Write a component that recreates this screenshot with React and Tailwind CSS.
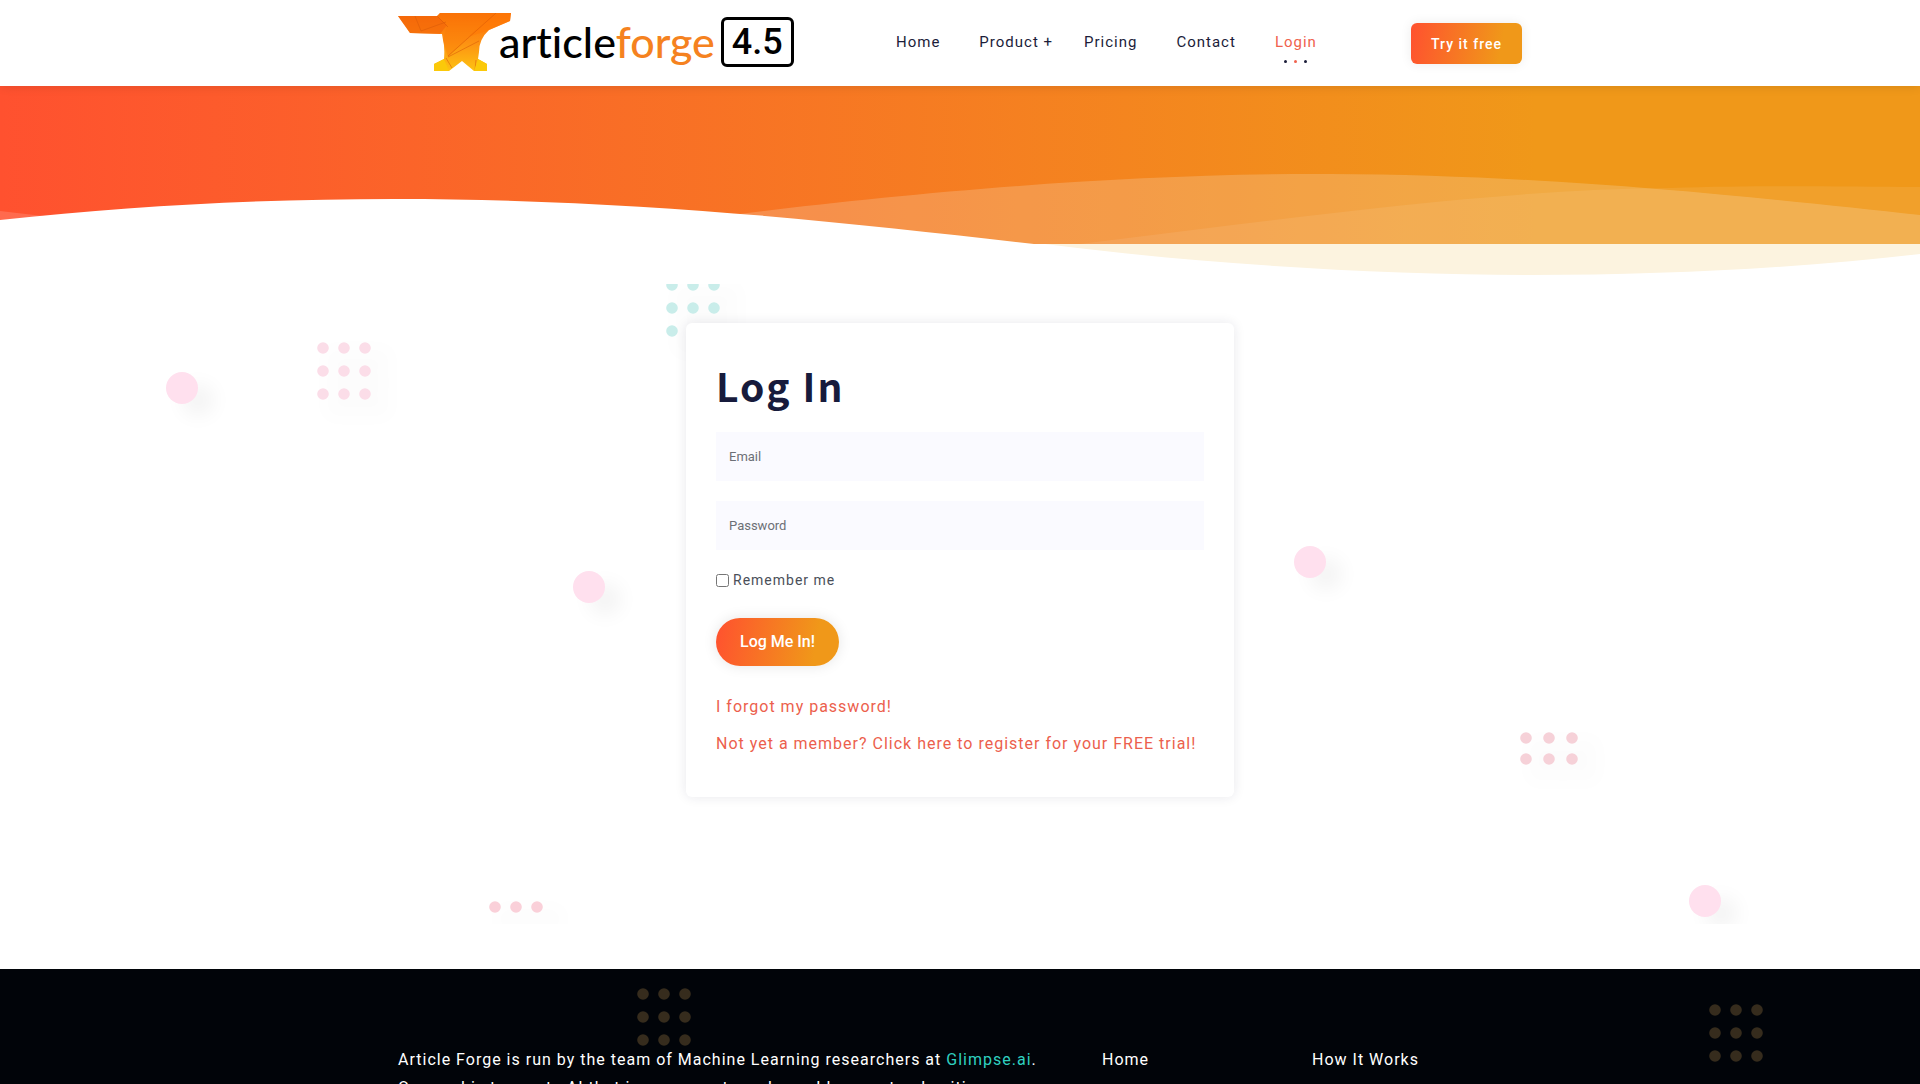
import React, { useState } from "react";

const navLinks = ["Home", "Product +", "Pricing", "Contact"];

// floating blobs behind the form, x/y relative to the decor layer
const blobs = [
  { id: 1, pos: "left-[8.65%] top-[88px]" },
  { id: 2, pos: "left-[29.85%] top-[287px]" },
  { id: 3, pos: "left-[67.4%] top-[262px]" },
  { id: 4, pos: "left-[87.95%] top-[601px]" },
];

const Dots = ({ cols = 3, rows = 3, gapX = 21, gapY = 23, className = "" }) => {
  const width = (cols - 1) * gapX + 12;
  const height = (rows - 1) * gapY + 12;
  return (
    <svg width={width} height={height} className={className} aria-hidden="true">
      {Array.from({ length: cols * rows }, (_, i) => (
        <circle key={i} cx={6 + (i % cols) * gapX} cy={6 + Math.floor(i / cols) * gapY} r="5.8" fill="currentColor" />
      ))}
    </svg>
  );
};

const Logo = () => (
  <a href="#" className="flex items-center" aria-label="articleforge 4.5">
    <svg viewBox="0 0 113 58" width="113" height="58" className="mb-0.5" aria-hidden="true">
      <defs>
        <linearGradient id="anvil" x1="0" y1="0" x2="0" y2="1">
          <stop offset="0" stopColor="#fb6d06" />
          <stop offset="0.5" stopColor="#fd9012" />
          <stop offset="1" stopColor="#fdc313" />
        </linearGradient>
      </defs>
      <path d="M0 3H39L42 0H113L112 8L91 17Q81 26 81 39L80 46L89 51V58H76L64 48L51 58H36V51L46 46Q47 34 45 27L44 21L12 20Z" fill="url(#anvil)" />
      <path d="M0 3H39L49 12L42 21L12 20Z" fill="#f2640a" opacity="0.6" />
      <path d="M42 0H96L50 44L45 27L49 12L39 3Z" fill="#fb7a08" opacity="0.4" />
      <path d="M96 0H113L112 8L91 17L70 24Z" fill="#ff7a05" opacity="0.6" />
      <path d="M17 3L23 18M23 18L48 9M39 3L50 14M98 0L50 43M81 28L50 44M48 45L54 55M78 47L77 57" stroke="#d95a08" strokeWidth="1" opacity="0.55" fill="none" />
      <path d="M36 51L46 46L51 58H36Z" fill="#fbc90a" />
      <path d="M80 46L89 51V58H76Z" fill="#fbc90a" />
    </svg>
    <span className="-ml-3 mb-1 font-[Lato,sans-serif] text-[43px] font-medium leading-none tracking-normal text-black [font-variant-ligatures:none]">
      article<span className="text-[#f58220]">forge</span>
    </span>
    <span className="mb-0.5 ml-1.5 rounded-md border-3 border-black px-2 text-4xl font-medium leading-11 tracking-normal text-black">4.5</span>
  </a>
);

const Header = () => (
  <header className="relative z-10 h-[86px] bg-white shadow-[0_0_10px_rgba(0,0,0,0.12)]">
    <div className="mx-auto flex h-full max-w-[1124px] items-center justify-between">
      <Logo />
      <nav className="mb-0.5 ml-14 flex items-center gap-[39px] text-[15px] text-[#1b1d3a]">
        {navLinks.map((item) => (
          <a key={item} href="#" className={item === "Product +" ? "-mr-2 hover:text-[#f0624d]" : "hover:text-[#f0624d]"}>
            {item}
          </a>
        ))}
        <a href="#" aria-current="page" className="relative text-[#f0624d]">
          Login
          <span className="absolute inset-x-0 -bottom-[10px] flex justify-center gap-[7px]">
            <i className="size-[3px] rounded-full bg-[#1b1d3a]" />
            <i className="size-[3px] rounded-full bg-[#f0624d]" />
            <i className="size-[3px] rounded-full bg-[#1b1d3a]" />
          </span>
        </a>
      </nav>
      <a href="#" className="ml-12 rounded-md bg-[linear-gradient(100deg,#ff512f,#f09819_80%)] px-5 pb-[7px] pt-[9px] text-sm font-medium leading-[25px] text-white shadow-[0_0_12px_rgba(0,0,0,0.08)]">
        Try it free
      </a>
    </div>
  </header>
);

const Banner = () => (
  <div className="relative h-[158px] bg-[linear-gradient(to_right,#ff512f,#f09819_80%)]">
    <svg viewBox="0 0 1920 198" preserveAspectRatio="none" className="absolute inset-x-0 top-0 h-[198px] w-full" aria-hidden="true">
      <path d="M1045 158C1200 178 1380 189 1530 189C1670 189 1800 182 1920 168V158Z" fill="#fcf3df" />
      <path d="M0 125L60 132V140H0Z" fill="#fff" opacity="0.15" />
      <path d="M700 133C860 112 1100 87 1330 88C1560 89 1760 112 1920 129V158H1000Z" fill="#f4efdc" opacity="0.22" />
      <path d="M1080 158C1290 132 1500 103 1670 102C1770 99 1850 101 1920 101V158Z" fill="#fff" opacity="0.08" />
      <path d="M0 134C130 120 260 113 395 113C640 113 850 137 1034 158H0Z" fill="#fff" />
    </svg>
  </div>
);

const LoginForm = () => {
  const [formData, setFormData] = useState({ email: "", password: "", remember: false });

  const handleChange = (e) => {
    const { name, type, checked, value } = e.target;
    setFormData({ ...formData, [name]: type === "checkbox" ? checked : value });
  };

  return (
    <form
      onSubmit={(e) => e.preventDefault()}
      className="relative mx-auto w-full max-w-[548px] rounded-md bg-white px-[30px] pb-[35px] pt-8 shadow-[0_0_12px_rgba(30,30,70,0.1)]"
    >
      <h1 className="font-['Noto_Sans_CJK_JP','Noto_Sans',sans-serif] text-[39px] font-bold leading-[60px] tracking-[2px] text-[#171b3c]">
        Log In
      </h1>
      <input
        name="email" type="email" placeholder="Email" aria-label="Email"
        value={formData.email} onChange={handleChange}
        className="mt-[17px] block h-[49px] w-full bg-[#fafaff] px-[13px] text-[13px] tracking-normal text-gray-700 outline-none placeholder:text-[#6c6f76]"
      />
      <input
        name="password" type="password" placeholder="Password" aria-label="Password"
        value={formData.password} onChange={handleChange}
        className="mt-5 block h-[49px] w-full bg-[#fafaff] px-[13px] text-[13px] tracking-normal text-gray-700 outline-none placeholder:text-[#6c6f76]"
      />
      <label className="mt-5 flex items-center gap-1 text-sm text-[#4a4f59]">
        <input name="remember" type="checkbox" checked={formData.remember} onChange={handleChange} className="size-[13px]" />
        Remember me
      </label>
      <button type="submit" className="mt-7 h-12 rounded-full bg-[linear-gradient(100deg,#ff512f,#f09819_80%)] px-6 font-medium tracking-normal text-white shadow-[0_0_14px_rgba(0,0,0,0.1)]">
        Log Me In!
      </button>
      <div className="mt-[22px] flex flex-col items-start leading-[37px] text-[#ec5f4d]">
        <a href="#">I forgot my password!</a>
        <a href="#">Not yet a member? Click here to register for your FREE trial!</a>
      </div>
    </form>
  );
};

const Footer = () => (
  <footer className="relative bg-[#010409] pt-[77px] text-white">
    <Dots className="absolute left-[33.2%] top-[19px] text-[#362c1d]" />
    <Dots className="absolute left-[89%] top-[35px] text-[#362c1d]" />
    <div className="relative mx-auto flex max-w-[1124px] leading-7">
      <p className="w-[704px] pr-4">
        Article Forge is run by the team of Machine Learning researchers at{" "}
        <a href="#" className="text-[#2fd0c0]">Glimpse.ai</a>.<br />
        Our goal is to create AI that is as accurate and capable as natural writing.
      </p>
      <a href="#" className="w-[210px]">Home</a>
      <a href="#">How It Works</a>
    </div>
  </footer>
);

const App = () => (
  <div className="h-screen overflow-hidden bg-white font-[Roboto,sans-serif] tracking-[1px]">
    <Header />
    <Banner />
    <main className="relative px-4 pb-[172px] pt-[79px]">
      <div className="absolute inset-x-0 bottom-[45px] top-10 overflow-hidden" aria-hidden="true">
        {blobs.map((b) => (
          <span key={b.id} className={`absolute size-8 rounded-full bg-[#ffe0ee] shadow-[16px_12px_20px_rgba(0,0,0,0.05)] ${b.pos}`} />
        ))}
        <Dots className="absolute left-[16.5%] top-[58px] text-[#fbdde8] drop-shadow-[14px_12px_10px_rgba(0,0,0,0.05)]" />
        <Dots className="absolute -top-[5px] left-[34.7%] text-[#c9edea] drop-shadow-[14px_12px_10px_rgba(0,0,0,0.05)]" />
        <Dots rows={2} gapX={23} gapY={21} className="absolute left-[79.15%] top-[448px] text-[#f6d1d8] drop-shadow-[14px_12px_10px_rgba(0,0,0,0.05)]" />
        <Dots rows={1} className="absolute left-[25.45%] top-[617px] text-[#fad0d9] drop-shadow-[14px_12px_10px_rgba(0,0,0,0.05)]" />
      </div>
      <LoginForm />
    </main>
    <Footer />
  </div>
);

export default App;
